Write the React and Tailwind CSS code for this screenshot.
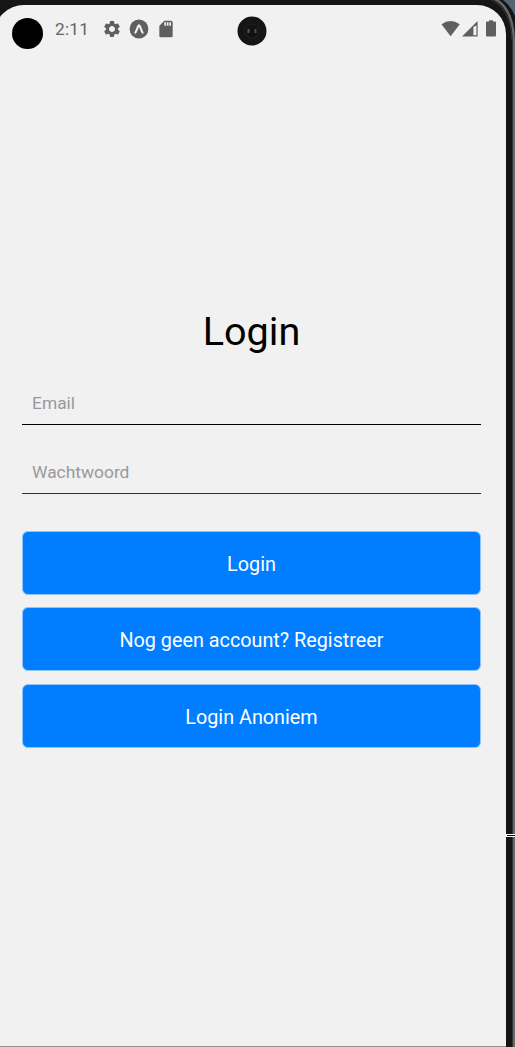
import React from "react";

function StatusIcons() {
  return (
    <>
      <svg className="ml-[13px] h-[20px] w-[20px]" viewBox="0 0 24 24" fill="#5f5f5f">
        <path d="M19.14 12.94c.04-.3.06-.61.06-.94 0-.32-.02-.64-.07-.94l2.03-1.58c.18-.14.23-.41.12-.61l-1.92-3.32c-.12-.22-.37-.29-.59-.22l-2.39.96c-.5-.38-1.03-.7-1.62-.94l-.36-2.54c-.04-.24-.24-.41-.48-.41h-3.84c-.24 0-.43.17-.47.41l-.36 2.54c-.59.24-1.13.57-1.62.94l-2.39-.96c-.22-.08-.47 0-.59.22L2.74 8.87c-.12.21-.08.47.12.61l2.03 1.58c-.05.3-.09.63-.09.94s.02.64.07.94l-2.03 1.58c-.18.14-.23.41-.12.61l1.92 3.32c.12.22.37.29.59.22l2.39-.96c.5.38 1.03.7 1.62.94l.36 2.54c.05.24.24.41.48.41h3.84c.24 0 .44-.17.47-.41l.36-2.54c.59-.24 1.13-.56 1.62-.94l2.39.96c.22.08.47 0 .59-.22l1.92-3.32c.12-.22.07-.47-.12-.61l-2.01-1.58zM12 15.6c-1.98 0-3.6-1.62-3.6-3.6s1.62-3.6 3.6-3.6 3.6 1.62 3.6 3.6-1.62 3.6-3.6 3.6z" />
      </svg>
      <svg className="ml-[7px] h-[20px] w-[20px]" viewBox="0 0 20 20">
        <circle cx="10" cy="10" r="9.4" fill="#5f5f5f" />
        <path d="M6.4 13.6 C8.2 11.2 8.7 6.4 10 6.4 C11.3 6.4 11.8 11.2 13.6 13.6" fill="none" stroke="#f1f1f1" strokeWidth="2.1" strokeLinecap="round" />
      </svg>
      <svg className="ml-[7px] h-[20px] w-[20px]" viewBox="0 0 24 24" fill="#5f5f5f">
        <path d="M18 2h-8L4.02 8 4 20c0 1.1.9 2 2 2h12c1.1 0 2-.9 2-2V4c0-1.1-.9-2-2-2zm-6 6h-2V4h2v4zm3 0h-2V4h2v4zm3 0h-2V4h2v4z" />
      </svg>
    </>
  );
}

function StatusBar() {
  return (
    <div className="relative flex h-[48px] shrink-0 items-center">
      <span className="mt-[9px] ml-[12px] h-[31px] w-[31px] rounded-full bg-black" />
      <span className="ml-[12px] w-[34px] text-[17.3px] leading-5 tracking-[0.2px] text-[#656565]">2:11</span>
      <StatusIcons />
      <svg className="absolute top-[11px] left-[237px] h-[30px] w-[30px]" viewBox="0 0 30 30">
        <circle cx="15" cy="15" r="14.5" fill="#151515" />
        <circle cx="15" cy="15" r="8" fill="#1b1b1b" />
        <circle cx="15" cy="15" r="6" fill="#111" />
        <rect x="10.5" y="13" width="2" height="4" fill="#665640" />
        <rect x="17.5" y="13" width="2" height="4" fill="#754337" />
      </svg>
      <svg className="mr-[9px] ml-auto h-[20px] w-[56px]" viewBox="0 0 56 20" fill="#5f5f5f">
        <path d="M.5 5.3 Q9.5-1.5 18.8 5.3 L9.6 17.3 Z" />
        <path fillRule="evenodd" d="M36.6 2 V17.5 H21 Z M32.4 8 V16.3 H35.4 V6.5 Z" />
        <path d="M48 2.5 V1.3 H52 V2.5 H54 Q55 2.5 55 3.5 V16.5 Q55 17.5 54 17.5 H46 Q45 17.5 45 16.5 V3.5 Q45 2.5 46 2.5 Z" />
      </svg>
    </div>
  );
}

function Field({ label, type, className }) {
  return (
    <input
      type={type}
      placeholder={label}
      aria-label={label}
      className={`block w-full rounded-none border-b bg-transparent pl-[10px] text-[17.4px] outline-none placeholder:text-[#999999] ${className}`}
    />
  );
}

function Button({ children }) {
  return (
    <button className="h-[64px] w-full rounded-[6px] border border-[#8fc4fb] bg-[#007eff] pt-[4px] text-[19.8px] text-white">
      {children}
    </button>
  );
}

function FrameCorner() {
  return (
    <svg className="absolute top-0 right-0 h-[40px] w-[35px]" viewBox="0 0 35 40" fill="none">
      <path d="M23 0 Q31 6 35 16 V0Z" fill="#566575" />
      <path d="M13-2 Q33 7 33.8 40" stroke="#686868" strokeWidth="2.4" />
      <path d="M10-1 Q31 8 32 40" stroke="#343434" strokeWidth="1.2" />
    </svg>
  );
}

export default function App() {
  return (
    <div className="relative flex h-[1047px] w-[515px] overflow-hidden bg-[#151515] pt-[5px] font-[Roboto,sans-serif]">
      <main className="-ml-[6px] flex w-[512px] shrink-0 flex-col rounded-tl-[30px] rounded-tr-[29px] border-b border-[#929292] bg-[#f1f1f1] pl-[6px]">
        <StatusBar />
        <h1 className="mt-[255px] mr-[3px] text-center text-[39.6px] leading-[48px] font-normal text-black">Login</h1>
        <form className="mt-[25px] ml-[22px] w-[459px]" onSubmit={(e) => e.preventDefault()}>
          <Field label="Email" type="email" className="h-[44px] border-black" />
          <Field label="Wachtwoord" type="password" className="mt-[25px] h-[44px] border-[#333333]" />
          <div className="mt-[37px] flex flex-col gap-[12.3px]">
            <Button>Login</Button>
            <Button>Nog geen account? Registreer</Button>
            <Button>Login Anoniem</Button>
          </div>
        </form>
      </main>
      <div className="mt-[34px] ml-[6px] w-[3px] shrink-0 border-l border-[#343434] bg-[#686868]" />
      <FrameCorner />
      <div className="absolute top-[834px] left-[506px] h-[3px] w-[9px] border-y border-l border-white bg-black" />
    </div>
  );
}
